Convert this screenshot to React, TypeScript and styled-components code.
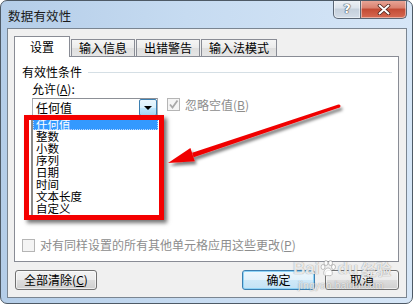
import React from 'react';
import styled, { createGlobalStyle } from 'styled-components';

const FONT = `"Noto Sans CJK SC", "Liberation Sans", sans-serif`;

const Global = createGlobalStyle`
  html, body { margin: 0; padding: 0; background: #ffffff; }
  body { font-family: ${FONT}; font-size: 12px; color: #000; }
  * { box-sizing: border-box; }
`;

const Window = styled.div`
  position: relative;
  width: 413px;
  height: 304px;
  border: 1px solid #4e5a66;
  border-radius: 7px;
  background: linear-gradient(to right, #b4cde8 0%, #c6dbf1 45%, #d6e6f7 100%);
  padding: 0 5px 5px 6px;
  display: flex;
  flex-direction: column;
  overflow: hidden;
`;

const TitleBar = styled.div`
  height: 27px;
  display: flex;
  align-items: flex-start;
  justify-content: space-between;
`;

const Title = styled.div`
  margin: 8px 0 0 1px;
  font-size: 12.5px;
  line-height: 14px;
  color: #1a1a1a;
  letter-spacing: 0.2px;
`;

const Caption = styled.div`
  display: flex;
  margin-top: -1px;
`;

const CapBtn = styled.div<{ $kind: 'help' | 'close' }>`
  height: 19px;
  width: ${(p) => (p.$kind === 'help' ? '28px' : '47px')};
  border: 1px solid #5a6674;
  border-top: none;
  display: flex;
  align-items: center;
  justify-content: center;
  border-radius: ${(p) => (p.$kind === 'help' ? '0 0 0 5px' : '0 0 5px 0')};
  margin-left: ${(p) => (p.$kind === 'close' ? '-1px' : '0')};
  background: ${(p) =>
    p.$kind === 'help'
      ? 'linear-gradient(#eef2f6 0%, #dbe3ec 45%, #c4cfdb 50%, #d3dde8 100%)'
      : 'linear-gradient(#e9a99b 0%, #d9806e 45%, #c24a34 50%, #d76a52 100%)'};
  box-shadow: inset 0 0 0 1px rgba(255, 255, 255, 0.45);
`;

const HelpMark = styled.span`
  font-family: "DejaVu Sans", sans-serif;
  font-weight: bold;
  font-size: 13px;
  line-height: 13px;
  color: #fff;
  text-shadow: 0 0 1px #3a4450, 0 0 1px #3a4450, 0 0 1px #3a4450;
  margin-top: -1px;
`;

const Client = styled.div`
  flex: 1;
  background: #f0f0f0;
  border: 1px solid #7a8591;
  display: flex;
  flex-direction: column;
  padding: 7px 7px 7px 6px;
`;

const Tabs = styled.div`
  display: flex;
  align-items: flex-end;
  height: 20px;
  position: relative;
  z-index: 2;
`;

const Tab = styled.div<{ $active?: boolean; $w: number }>`
  width: ${(p) => p.$w}px;
  height: ${(p) => (p.$active ? '21px' : '17px')};
  margin-bottom: ${(p) => (p.$active ? '-1px' : '0')};
  margin-left: ${(p) => (p.$active ? '0' : '1px')};
  border: 1px solid #898c95;
  border-bottom: none;
  background: ${(p) =>
    p.$active ? '#ffffff' : 'linear-gradient(#f5f5f5 0%, #ebebeb 50%, #dedede 51%, #e6e6e6 100%)'};
  display: flex;
  justify-content: center;
  align-items: ${(p) => (p.$active ? 'flex-start' : 'center')};
  padding-top: ${(p) => (p.$active ? '3px' : '0')};
  font-size: 12px;
  line-height: 14px;
  white-space: nowrap;
`;

const Panel = styled.div`
  position: relative;
  height: 206px;
  background: #ffffff;
  border: 1px solid #898c95;
  display: flex;
  flex-direction: column;
`;

const GroupHead = styled.div`
  margin-top: 8px;
  height: 14px;
  padding-left: 7px;
  display: flex;
  align-items: center;
  line-height: 14px;
`;

const Rule = styled.div`
  flex: 1;
  height: 1px;
  background: #d5dfe5;
  margin: 0 6px 0 6px;
`;

const FieldLabel = styled.div`
  margin-top: 3px;
  height: 14px;
  line-height: 14px;
  padding-left: 17px;
`;

const ComboRow = styled.div`
  margin-top: 2px;
  height: 19px;
  padding-left: 17px;
  display: flex;
  align-items: flex-start;
`;

const Combo = styled.div`
  width: 126px;
  height: 19px;
  border: 1px solid #abadb3;
  border-top-color: #8d9096;
  display: flex;
  align-items: center;
  justify-content: space-between;
  padding-left: 3px;
  line-height: 14px;
`;

const DropBtn = styled.div`
  width: 18px;
  height: 17px;
  border: 1px solid #3c7fb1;
  border-radius: 2px;
  background: linear-gradient(#eaf6fd 0%, #d9f0fc 50%, #bee6fd 51%, #a7d9f5 100%);
  display: flex;
  align-items: center;
  justify-content: center;
`;

const Tri = styled.div`
  width: 0;
  height: 0;
  border-left: 4px solid transparent;
  border-right: 4px solid transparent;
  border-top: 4px solid #000;
  margin-top: 1px;
`;

const CheckBox = styled.div<{ $disabled?: boolean }>`
  width: 13px;
  height: 13px;
  border: 1px solid ${(p) => (p.$disabled ? '#b5b5b5' : '#8f8f8f')};
  background: ${(p) => (p.$disabled ? '#f4f4f4' : 'linear-gradient(135deg,#dcdcdc,#fcfcfc)')};
  display: flex;
  align-items: center;
  justify-content: center;
  flex: none;
`;

const CheckLabel = styled.span<{ $gray?: boolean }>`
  margin-left: 5px;
  line-height: 14px;
  color: ${(p) => (p.$gray ? '#8d8d8d' : '#000')};
  white-space: nowrap;
`;

const IgnoreWrap = styled.div`
  display: flex;
  align-items: center;
  margin-left: 9px;
  height: 13px;
`;

const BottomCheck = styled.div`
  margin-top: auto;
  margin-bottom: 9px;
  height: 14px;
  padding-left: 7px;
  display: flex;
  align-items: center;
`;

const ListPopup = styled.div`
  position: absolute;
  left: 16px;
  top: 59px;
  width: 127px;
  height: 99px;
  background: #ffffff;
  border-left: 2px solid #8a8a8a;
  padding-top: 2px;
  z-index: 3;
`;

const ListItem = styled.div<{ $sel?: boolean }>`
  height: 12px;
  line-height: 12px;
  font-size: 11.5px;
  padding-left: 3px;
  background: ${(p) => (p.$sel ? '#3399ff' : 'transparent')};
  color: ${(p) => (p.$sel ? '#ffffff' : '#000000')};
  outline: ${(p) => (p.$sel ? '1px dotted #bbd8ff' : 'none')};
  outline-offset: -1px;
  white-space: nowrap;
`;

const RedBox = styled.div`
  position: absolute;
  left: 9px;
  top: 58px;
  width: 140px;
  height: 105px;
  border: 5px solid #f40000;
  box-shadow: 3px 3px 4px rgba(0, 0, 0, 0.55);
  z-index: 4;
`;

const ButtonRow = styled.div`
  margin-top: 8px;
  height: 20px;
  display: flex;
  align-items: center;
  padding-left: 1px;
`;

const Btn = styled.div<{ $w: number; $default?: boolean }>`
  width: ${(p) => p.$w}px;
  height: 20px;
  border: 1px solid ${(p) => (p.$default ? '#3c7fb1' : '#707070')};
  border-radius: 3px;
  background: ${(p) =>
    p.$default
      ? 'linear-gradient(#edf7fd 0%, #e3f2fb 50%, #cfe9f8 51%, #c3e2f5 100%)'
      : 'linear-gradient(#f2f2f2 0%, #ebebeb 50%, #dddddd 51%, #cfcfcf 100%)'};
  box-shadow: ${(p) => (p.$default ? 'inset 0 0 0 1px #8fd4f7' : 'inset 0 0 0 1px rgba(255,255,255,0.6)')};
  display: flex;
  align-items: center;
  justify-content: center;
  line-height: 14px;
  white-space: nowrap;
`;

const Grow = styled.div`
  flex: 1;
`;

const Gap = styled.div`
  width: 10px;
`;

const Overlay = styled.svg`
  position: absolute;
  left: -1px;
  top: -1px;
  width: 414px;
  height: 305px;
  pointer-events: none;
  z-index: 5;
`;

const Watermark = styled.div`
  position: absolute;
  left: 292px;
  top: 259px;
  z-index: 6;
  display: flex;
  flex-direction: column;
  align-items: flex-start;
  pointer-events: none;
  color: rgba(255, 255, 255, 0.8);
  text-shadow: 0 0 1px rgba(120, 120, 120, 0.55), 0 0 1px rgba(120, 120, 120, 0.55);
`;

const WmTop = styled.div`
  display: flex;
  align-items: center;
  font-family: "Liberation Sans", sans-serif;
  font-weight: bold;
  font-size: 17px;
  line-height: 17px;
`;

const WmCn = styled.span`
  font-family: ${FONT};
  font-size: 15px;
  margin-left: 3px;
  font-weight: bold;
`;

const WmUrl = styled.div`
  font-family: "Liberation Sans", sans-serif;
  font-size: 10px;
  line-height: 10px;
  margin-top: 4px;
  margin-left: 5px;
  letter-spacing: 0.3px;
`;

const Paw = () => (
  <svg width="16" height="17" viewBox="0 0 16 17" style={{ margin: '0 1px' }}>
    <g fill="rgba(255,255,255,0.85)" stroke="rgba(120,120,120,0.55)" strokeWidth="0.8">
      <ellipse cx="3" cy="7" rx="2" ry="2.5" />
      <ellipse cx="6" cy="3" rx="2" ry="2.5" />
      <ellipse cx="10.5" cy="3" rx="2" ry="2.5" />
      <ellipse cx="13.5" cy="7" rx="2" ry="2.5" />
      <path d="M8 8 C5 8 3 12 4 14.5 C5 16.5 7 15.5 8 15.5 C9 15.5 11 16.5 12 14.5 C13 12 11 8 8 8 Z" />
    </g>
  </svg>
);

const Check = ({ color }: { color: string }) => (
  <svg width="11" height="11" viewBox="0 0 11 11">
    <path d="M2 5.5 L4.5 8.5 L9.5 1.5" fill="none" stroke={color} strokeWidth="1.8" />
  </svg>
);

const CloseX = () => (
  <svg width="14" height="11" viewBox="0 0 14 11">
    <path d="M2.5 1.5 L11.5 9.5 M11.5 1.5 L2.5 9.5" stroke="#4a2018" strokeWidth="3.6" strokeLinecap="round" />
    <path d="M2.5 1.5 L11.5 9.5 M11.5 1.5 L2.5 9.5" stroke="#ffffff" strokeWidth="2" strokeLinecap="round" />
  </svg>
);

const items = ['任何值', '整数', '小数', '序列', '日期', '时间', '文本长度', '自定义'];

export default function App() {
  return (
    <>
      <Global />
      <Window>
        <TitleBar>
          <Title>数据有效性</Title>
          <Caption>
            <CapBtn $kind="help">
              <HelpMark>?</HelpMark>
            </CapBtn>
            <CapBtn $kind="close">
              <CloseX />
            </CapBtn>
          </Caption>
        </TitleBar>
        <Client>
          <Tabs>
            <Tab $active $w={56}>设置</Tab>
            <Tab $w={64}>输入信息</Tab>
            <Tab $w={64}>出错警告</Tab>
            <Tab $w={76}>输入法模式</Tab>
          </Tabs>
          <Panel>
            <GroupHead>
              <span>有效性条件</span>
              <Rule />
            </GroupHead>
            <FieldLabel>
              允许(<u>A</u>):
            </FieldLabel>
            <ComboRow>
              <Combo>
                <span>任何值</span>
                <DropBtn>
                  <Tri />
                </DropBtn>
              </Combo>
              <IgnoreWrap>
                <CheckBox $disabled>
                  <Check color="#a8a8a8" />
                </CheckBox>
                <CheckLabel $gray>
                  忽略空值(<u>B</u>)
                </CheckLabel>
              </IgnoreWrap>
            </ComboRow>
            <BottomCheck>
              <CheckBox $disabled />
              <CheckLabel $gray>
                对有同样设置的所有其他单元格应用这些更改(<u>P</u>)
              </CheckLabel>
            </BottomCheck>
            <ListPopup>
              {items.map((t, i) => (
                <ListItem key={t} $sel={i === 0}>
                  {t}
                </ListItem>
              ))}
            </ListPopup>
            <RedBox />
          </Panel>
          <ButtonRow>
            <Btn $w={82}>
              全部清除(<u>C</u>)
            </Btn>
            <Grow />
            <Btn $w={73} $default>
              确定
            </Btn>
            <Gap />
            <Btn $w={74}>取消</Btn>
          </ButtonRow>
        </Client>
        <Overlay viewBox="0 0 414 305">
          <defs>
            <filter id="sh" x="-20%" y="-50%" width="140%" height="200%">
              <feDropShadow dx="2" dy="3" stdDeviation="1.6" floodColor="#000" floodOpacity="0.5" />
            </filter>
          </defs>
          <g filter="url(#sh)" fill="#f00000">
            <polygon points="193.6,157.2 192.2,152.8 338.4,104.5 339.6,107.5" />
            <circle cx="339" cy="106" r="1.5" />
            <polygon points="168,163 190.4,148.1 194.8,161.3" />
          </g>
        </Overlay>
        <Watermark>
          <WmTop>
            Bai
            <Paw />
            du
            <WmCn>经验</WmCn>
          </WmTop>
          <WmUrl>jingyan.baidu.com</WmUrl>
        </Watermark>
      </Window>
    </>
  );
}
